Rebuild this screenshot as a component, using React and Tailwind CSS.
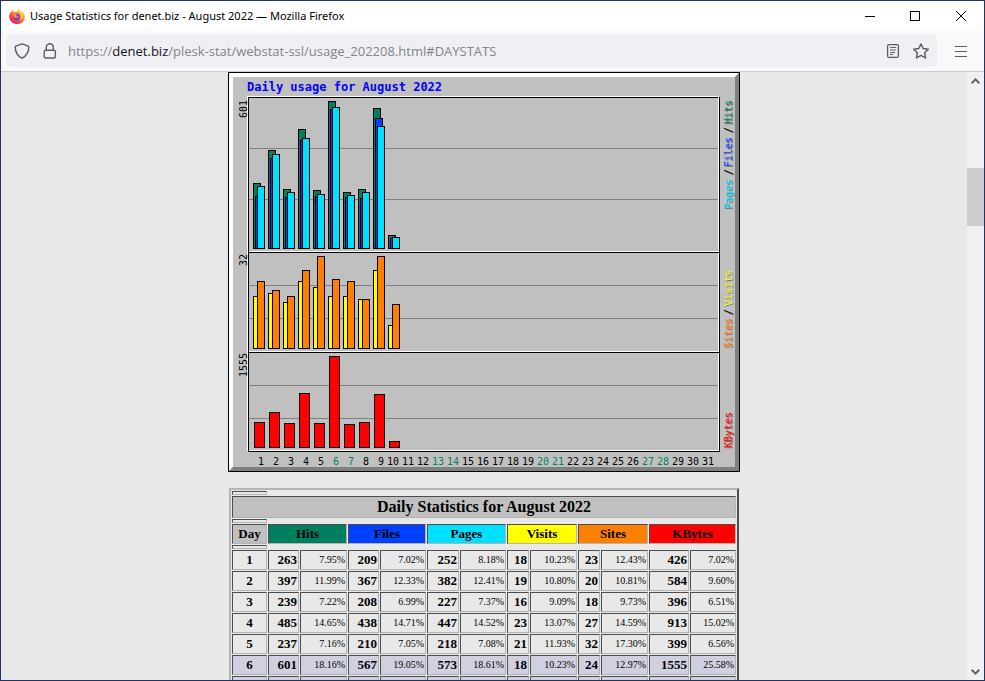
const DAYS = Array.from({ length: 31 }, (_, i) => i + 1);
const WEEKEND = [6, 7, 13, 14, 20, 21, 27, 28];

// Top edge of each day's bar, in chart units
const HITS = [111, 78, 117, 57, 118, 29, 120, 117, 36, 163];
const FILES = [124, 86, 125, 68, 124, 37, 125, 126, 46, 166];
const PAGES = [114, 82, 120, 66, 122, 35, 123, 120, 54, 165];
const VISITS = [224, 221, 230, 209, 215, 224, 224, 227, 198, 253];
const SITES = [209, 218, 224, 198, 184, 207, 209, 227, 184, 232];
const KBYTES = [350, 340, 351, 321, 351, 284, 352, 350, 322, 369];

const SERIES = [
  { name: "hits", tops: HITS, x: 25, width: 7, base: 176, color: "#008060" },
  { name: "files", tops: FILES, x: 27, width: 7, base: 176, color: "#0040ff" },
  { name: "pages", tops: PAGES, x: 29, width: 7, base: 176, color: "#00e0ff" },
  { name: "visits", tops: VISITS, x: 25, width: 7, base: 276, color: "#ffff00" },
  { name: "sites", tops: SITES, x: 29, width: 7, base: 276, color: "#ff8000" },
  { name: "kbytes", tops: KBYTES, x: 26, width: 10, base: 375, color: "#ff0000" },
];

const LEGEND = [
  { text: "Hits", y: 52, color: "#008060" },
  { text: "/", y: 61, color: "#000000" },
  { text: "Files", y: 95, color: "#0040ff" },
  { text: "/", y: 103, color: "#000000" },
  { text: "Pages", y: 137, color: "#00e0ff" },
  { text: "Visits", y: 234, color: "#ffff00" },
  { text: "/", y: 243, color: "#000000" },
  { text: "Sites", y: 276, color: "#ff8000" },
  { text: "KBytes", y: 376, color: "#ff0000" },
];

const COLUMNS = [
  { label: "Hits", className: "bg-[#008060]" },
  { label: "Files", className: "bg-[#0040ff]" },
  { label: "Pages", className: "bg-[#00e0ff]" },
  { label: "Visits", className: "bg-[#ffff00]" },
  { label: "Sites", className: "bg-[#ff8000]" },
  { label: "KBytes", className: "bg-[#ff0000]" },
];

const ROWS = [
  ["1", "263", "7.95%", "209", "7.02%", "252", "8.18%", "18", "10.23%", "23", "12.43%", "426", "7.02%"],
  ["2", "397", "11.99%", "367", "12.33%", "382", "12.41%", "19", "10.80%", "20", "10.81%", "584", "9.60%"],
  ["3", "239", "7.22%", "208", "6.99%", "227", "7.37%", "16", "9.09%", "18", "9.73%", "396", "6.51%"],
  ["4", "485", "14.65%", "438", "14.71%", "447", "14.52%", "23", "13.07%", "27", "14.59%", "913", "15.02%"],
  ["5", "237", "7.16%", "210", "7.05%", "218", "7.08%", "21", "11.93%", "32", "17.30%", "399", "6.56%"],
  ["6", "601", "18.16%", "567", "19.05%", "573", "18.61%", "18", "10.23%", "24", "12.97%", "1555", "25.58%"],
  ["", "", "", "", "", "", "", "", "", "", "", "", ""],
];

const CELL = "border border-t-[#4d4d4d] border-l-[#4d4d4d] border-r-[#b3b3b3] border-b-[#b3b3b3]";

function FirefoxLogo() {
  return (
    <svg viewBox="0 0 16 16" className="h-4 w-4 shrink-0" aria-hidden="true">
      <defs>
        <linearGradient id="flame" x1="0.85" y1="0.1" x2="0.2" y2="0.95">
          <stop offset="0" stopColor="#fff44f" />
          <stop offset="0.3" stopColor="#ffb32b" />
          <stop offset="0.6" stopColor="#ff5634" />
          <stop offset="1" stopColor="#f0157a" />
        </linearGradient>
        <linearGradient id="globe" x1="0.7" y1="0" x2="0.3" y2="1">
          <stop offset="0" stopColor="#b833e1" />
          <stop offset="1" stopColor="#4a4fd0" />
        </linearGradient>
      </defs>
      <path
        d="M9.3 0c.3 1.3 1 2.200 2.100 3 .5.400.900.800 1.200 1.300-.1-.6-.1-1.100 0-1.600C14.800 4.200 15.900 6.300 15.900 8.600a7.800 7.400 0 0 1-15.700.2C.1 6.900.7 5 1.700 3.700l.1 1.200c.5-1.300 1.200-2.200 2.100-2.900l.5 1.800c1.600-.1 3-.1 3.900-.9C8.900 2.100 9.100 1 9.300 0z"
        fill="url(#flame)"
      />
      <circle cx="8" cy="8.700" r="3.700" fill="url(#globe)" />
      <path d="M3.200 5.200C4.500 4.300 6 4.500 7 5.300c.7.200 1.500.1 1.800.3-.2.900-1.300 1.200-1.800 1.700-.3.600.3 1.200 1 1.100.9 0 1.500-.5 2.200-.1-.6 1.500-2.400 2.200-4 1.600-1.700-.6-2.700-2.500-3-4.700z" fill="#ff8a2a" />
      <path d="M10.500 3.600c2 1 2.900 3.100 2.600 5.200-.2 1.700-1.300 3-2.600 3.700 1.200-1.800 1.400-3.700.9-5.200-.4-1.200-.9-2-.9-3.700z" fill="#ffd83d" />
    </svg>
  );
}

function ShieldIcon() {
  return (
    <svg viewBox="0 0 16 16" className="h-4 w-4" fill="none" stroke="#5b5b66" strokeWidth="1.4" strokeLinejoin="round">
      <path d="M8 .9 14.200 3.100c.4.100.6.400.6.800C14.800 9 12.300 12.900 8 15.200 3.700 12.900 1.200 9 1.200 3.900c0-.4.200-.7.600-.8z" />
    </svg>
  );
}

function LockIcon() {
  return (
    <svg viewBox="0 0 16 16" className="h-4 w-4" fill="none" stroke="#5b5b66" strokeWidth="1.4">
      <rect x="2.2" y="7.2" width="11.2" height="7.8" rx="1.5" />
      <path d="M4.3 7V4.300a3.500 3.500 0 0 1 7 0V7" />
    </svg>
  );
}

function ReaderIcon() {
  return (
    <svg viewBox="0 0 16 16" className="h-4 w-4" fill="none" stroke="#5b5b66" strokeWidth="1.3" strokeLinecap="round">
      <rect x="2.6" y="1.6" width="10.8" height="12.8" rx="1.5" />
      <path d="M5.500 4.500h5.200M5.500 7h5.200M5.500 9.500h4M5.500 11.500h2.200" strokeWidth="1.2" />
    </svg>
  );
}

function StarIcon() {
  return (
    <svg viewBox="0 0 16 16" className="h-4 w-4" fill="none" stroke="#5b5b66" strokeWidth="1.4" strokeLinejoin="round">
      <path d="M8 .9 10.200 5.500 15.300 6.200 11.600 9.700 12.600 15 8 12.400 3.400 15 4.400 9.700.7 6.200 5.800 5.500z" />
    </svg>
  );
}

function TitleBar() {
  return (
    <header className="flex h-[30px] shrink-0 items-center bg-white pl-2">
      <FirefoxLogo />
      <h1 className="ml-[5px] flex-1 truncate font-['Noto_Sans','Open_Sans',sans-serif] text-[11px] text-black">
        Usage Statistics for denet.biz - August 2022 — Mozilla Firefox
      </h1>
      <button aria-label="Minimize" className="flex h-full w-[45px] items-center justify-center">
        <svg viewBox="0 0 10 10" className="h-2.5 w-2.5" shapeRendering="crispEdges">
          <rect y="5" width="10" height="1" />
        </svg>
      </button>
      <button aria-label="Maximize" className="flex h-full w-[45px] items-center justify-center">
        <svg viewBox="0 0 10 10" className="h-2.5 w-2.5" fill="none" stroke="#000" shapeRendering="crispEdges">
          <rect x="0.5" y="0.5" width="9" height="9" />
        </svg>
      </button>
      <button aria-label="Close" className="flex h-full w-[47px] items-center justify-center">
        <svg viewBox="0 0 10 10" className="h-2.5 w-2.5" stroke="#000">
          <path d="M0 0 10 10M10 0 0 10" />
        </svg>
      </button>
    </header>
  );
}

function AddressBar() {
  return (
    <div className="flex shrink-0 border-b border-[#cccccc] bg-[#f9f9fb] py-1 pl-[5px]">
      <div className="flex h-8 flex-1 items-center gap-2.5 rounded bg-[#f0f0f4] px-2">
        <div className="flex gap-3">
          <button aria-label="Tracking protection">
            <ShieldIcon />
          </button>
          <button aria-label="Connection secure">
            <LockIcon />
          </button>
        </div>
        <div className="relative h-5 flex-1 font-['Open_Sans','Noto_Sans',sans-serif] text-[13px] leading-5">
          <input
            type="text"
            aria-label="Address"
            defaultValue="https://denet.biz/plesk-stat/webstat-ssl/usage_202208.html#DAYSTATS"
            className="block h-5 w-full bg-transparent text-transparent caret-black outline-none"
          />
          <span aria-hidden="true" className="pointer-events-none absolute inset-0 whitespace-nowrap text-[#84848b]">
            https://<span className="text-[#15141a]">denet.biz</span>
            /plesk-stat/webstat-ssl/usage_202208.html#DAYSTATS
          </span>
        </div>
        <div className="flex gap-3">
          <button aria-label="Reader view">
            <ReaderIcon />
          </button>
          <button aria-label="Bookmark this page">
            <StarIcon />
          </button>
        </div>
      </div>
      <button aria-label="Menu" className="flex w-[47px] items-center justify-center">
        <svg viewBox="0 0 12 11" className="h-[11px] w-3" fill="none" stroke="#5b5b66" strokeWidth="1.2">
          <path d="M0 .5h12M0 5.500h12M0 10.500h12" />
        </svg>
      </button>
    </div>
  );
}

function SideText({ x, y, color, shadow, children }) {
  return (
    <>
      {shadow && (
        <text transform={`translate(${x + 1} ${y + 1}) rotate(-90)`} fill="#808080">
          {children}
        </text>
      )}
      <text transform={`translate(${x} ${y}) rotate(-90)`} fill={color}>
        {children}
      </text>
    </>
  );
}

function UsageChart() {
  return (
    <svg
      width="512"
      height="400"
      viewBox="0 0 512 400"
      role="img"
      aria-label="Daily usage for August 2022"
      className="block shrink-0 font-['DejaVu_Sans_Mono',monospace] text-[10px]"
    >
      {/* raised panel */}
      <rect width="512" height="400" fill="#000" />
      <rect x="1" y="1" width="510" height="398" fill="#c0c0c0" />
      <path d="M1 1H511L507 5H5V395L1 399z" fill="#fff" />
      <path d="M511 1V399H1L5 395H507V5z" fill="#808080" />

      {/* grid and frames, each line drawn twice for the etched look */}
      <g fill="none" shapeRendering="crispEdges">
        <path
          d="M21 76.5H490M21 127.5H490M21 213.5H490M21 246.5H490M21 313.5H490M21 346.5H490"
          stroke="#808080"
        />
        <path d="M19 24.5H491M19.5 24V379M20 179.5H491M20 279.5H491M20 378.5H491M490.5 24V379" stroke="#fff" />
        <path d="M20 25.5H490M20.5 25V380M20 180.5H492M20 280.5H492M20 379.5H492M491.5 25V380" stroke="#000" />
      </g>

      {/* bars overlap from back to front in series order */}
      <g stroke="#000" shapeRendering="crispEdges">
        {SERIES.map((s) =>
          s.tops.map((top, i) => (
            <rect
              key={`${s.name}-${i}`}
              x={s.x + i * 15 + 0.5}
              y={top + 0.5}
              width={s.width}
              height={s.base - top}
              fill={s.color}
            />
          ))
        )}
      </g>

      <text x="19" y="19" fill="#0000ff" className="text-[12px] font-bold">
        Daily usage for August 2022
      </text>
      <SideText x={19} y={46} color="#000">601</SideText>
      <SideText x={19} y={194} color="#000">32</SideText>
      <SideText x={19} y={305} color="#000">1555</SideText>
      {LEGEND.map((item) => (
        <SideText key={item.y} x={504} y={item.y} color={item.color} shadow>
          {item.text}
        </SideText>
      ))}
      {DAYS.map((day) => (
        <text
          key={day}
          x={21 + day * 15}
          y="393"
          textAnchor="end"
          fill={WEEKEND.includes(day) ? "#008060" : "#000"}
        >
          {day}
        </text>
      ))}
    </svg>
  );
}

function SpacerRow() {
  return (
    <tr className="h-1">
      <td className={CELL} />
    </tr>
  );
}

function DailyTable() {
  return (
    <table className="w-[510px] shrink-0 table-fixed border-separate border-spacing-px border-2 border-t-[#b3b3b3] border-l-[#b3b3b3] border-r-[#4d4d4d] border-b-[#4d4d4d] font-['Liberation_Serif',serif] text-[13px] leading-[18px] text-black">
      <colgroup>
        <col className="w-[35px]" />
        <col className="w-[31px]" />
        <col className="w-[47px]" />
        <col className="w-[31px]" />
        <col className="w-[46px]" />
        <col className="w-[32px]" />
        <col className="w-[46px]" />
        <col className="w-[22px]" />
        <col className="w-[47px]" />
        <col className="w-[22px]" />
        <col className="w-[47px]" />
        <col className="w-[40px]" />
        <col className="w-[46px]" />
      </colgroup>
      <thead>
        <SpacerRow />
        <tr>
          <th colSpan={13} className={`${CELL} h-[22px] bg-[#c0c0c0] text-[16px] leading-5`}>
            Daily Statistics for August 2022
          </th>
        </tr>
        <SpacerRow />
        <tr className="h-5">
          <th className={`${CELL} bg-[#c0c0c0]`}>Day</th>
          {COLUMNS.map((col) => (
            <th key={col.label} colSpan={2} className={`${CELL} ${col.className}`}>
              {col.label}
            </th>
          ))}
        </tr>
        <SpacerRow />
      </thead>
      <tbody>
        {ROWS.map((row, r) => (
          <tr key={r} className={r >= 5 ? "h-5 bg-[#d0d0e0]" : "h-5"}>
            {row.map((value, c) => {
              if (c === 0) {
                return (
                  <td key={c} className={`${CELL} text-center font-bold`}>
                    {value}
                  </td>
                );
              }
              return (
                <td key={c} className={`${CELL} pr-px text-right ${c % 2 ? "font-bold" : "text-[10px]"}`}>
                  {value}
                </td>
              );
            })}
          </tr>
        ))}
      </tbody>
    </table>
  );
}

function Scrollbar() {
  return (
    <div className="flex w-[17px] shrink-0 flex-col bg-[#f0f0f0]">
      <button aria-label="Scroll up" className="flex h-[17px] items-center justify-center">
        <svg viewBox="0 0 9 6" className="h-1.5 w-[9px]" fill="none" stroke="#606060" strokeWidth="2">
          <path d="M.7 5.200 4.500 1.400 8.300 5.200" />
        </svg>
      </button>
      <div className="flex-1 pt-[79px]">
        <div className="h-[58px] bg-[#cdcdcd]" />
      </div>
      <button aria-label="Scroll down" className="flex h-[17px] items-center justify-center">
        <svg viewBox="0 0 9 6" className="h-1.5 w-[9px]" fill="none" stroke="#606060" strokeWidth="2">
          <path d="M.7.800 4.500 4.600 8.300.800" />
        </svg>
      </button>
    </div>
  );
}

export default function App() {
  return (
    <div className="flex h-screen flex-col overflow-hidden border border-[#1f3566]">
      <TitleBar />
      <AddressBar />
      <div className="flex min-h-0 flex-1">
        <main className="flex min-w-0 flex-1 flex-col items-center gap-4 overflow-hidden bg-[#e8e8e8]">
          <UsageChart />
          <DailyTable />
        </main>
        <Scrollbar />
      </div>
    </div>
  );
}
